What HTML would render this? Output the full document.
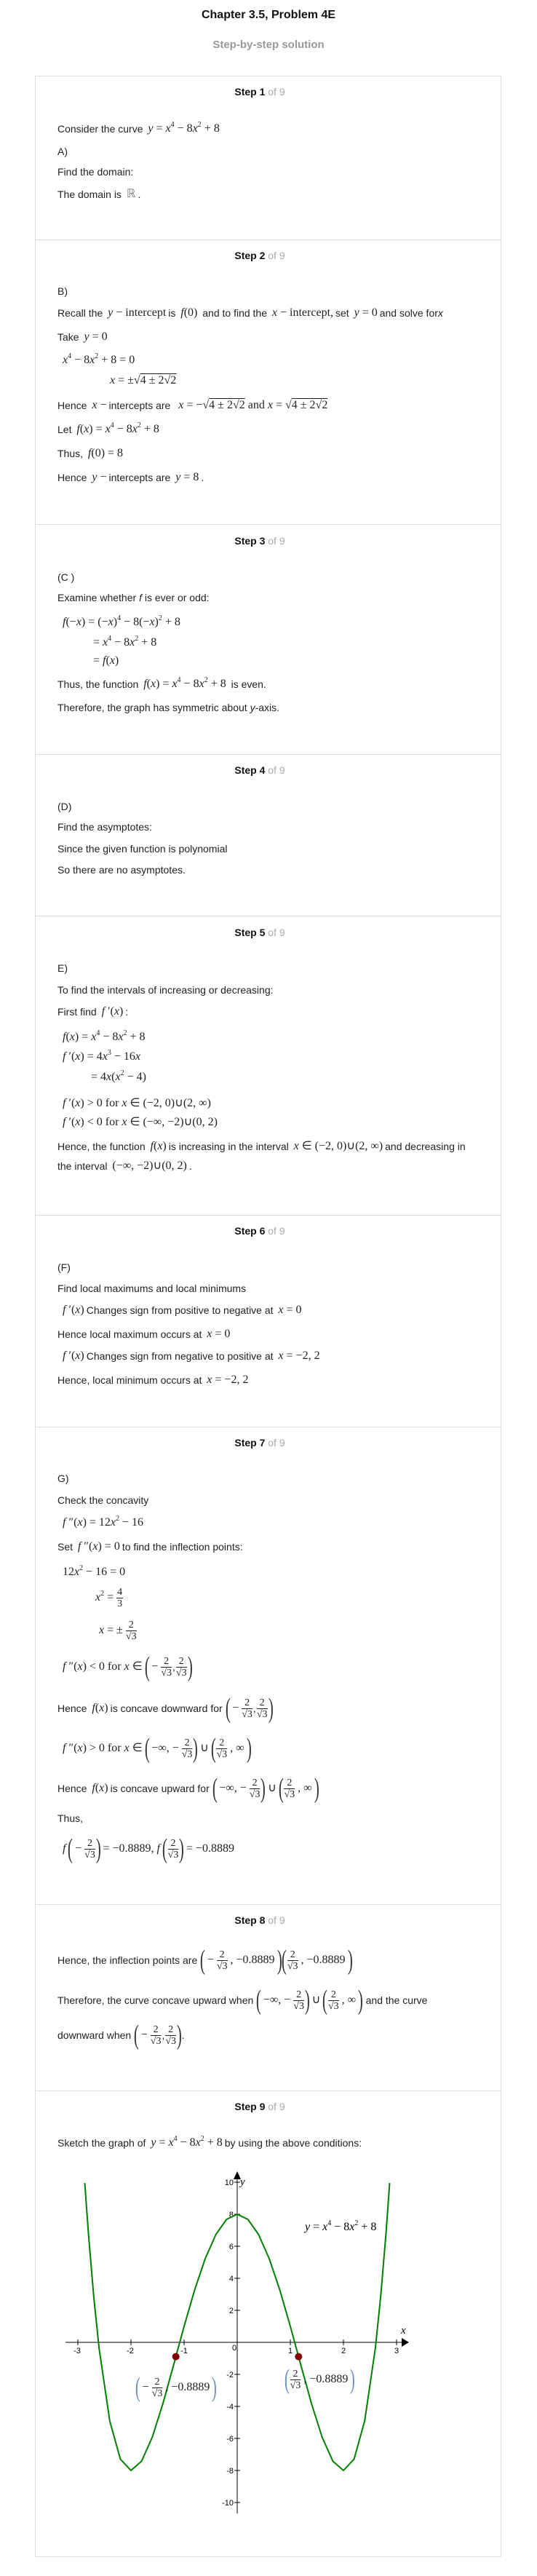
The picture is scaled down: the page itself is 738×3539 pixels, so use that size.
<!DOCTYPE html>
<html><head><meta charset="utf-8"><style>
*{margin:0;padding:0;box-sizing:border-box}
body{width:738px;height:3539px;background:#fff;position:relative;font-family:"Liberation Sans",Arial,sans-serif;color:#222;overflow:hidden}
.a{position:absolute;white-space:nowrap}
.title{left:0;width:738px;text-align:center;font-weight:bold;font-size:16px;top:12px;color:#111}
.sub{left:0;width:738px;text-align:center;font-weight:bold;font-size:15px;top:53px;color:#999}
.box{position:absolute;left:48px;top:104px;width:641px;height:3409px;border:1px solid #ddd}
.hr{position:absolute;left:48px;width:641px;height:1px;background:#ddd}
.h{left:0;width:714px;text-align:center;font-size:14px;font-weight:bold;line-height:20px;color:#111}
.h span{font-weight:normal;color:#aaa}
.L{position:absolute;left:79px;font-size:14px;line-height:20px;white-space:nowrap;display:flex;align-items:center;height:20px}
.F{height:44px}
.m{font-family:"Liberation Serif",serif;font-size:16px;margin:0 3px}
.m i{font-style:italic}
sup{font-size:10px;vertical-align:7px;line-height:0}
.fr{display:inline-flex;flex-direction:column;text-align:center;font-family:"Liberation Serif",serif;font-size:14px;line-height:15px;vertical-align:middle;margin:0 1px}
.fr>span:first-child{border-bottom:1px solid #222;padding:0 1px}
.ov{text-decoration:overline}
.bp{font-family:"Liberation Serif",serif;font-size:38px;line-height:38px;display:inline-block;transform:scaleX(.55);font-weight:100;color:#333;margin:0 -3px}
</style></head><body>
<div class="a title">Chapter 3.5, Problem 4E</div>
<div class="a sub">Step-by-step solution</div>
<div class="box"></div>
<div class="hr" style="top:329px"></div><div class="hr" style="top:720px"></div><div class="hr" style="top:1036px"></div><div class="hr" style="top:1258px"></div><div class="hr" style="top:1669px"></div><div class="hr" style="top:1960px"></div><div class="hr" style="top:2616px"></div><div class="hr" style="top:2872px"></div>

<div class="a h" style="top:116px">Step 1 <span>of 9</span></div>
<div class="a h" style="top:341px">Step 2 <span>of 9</span></div>
<div class="a h" style="top:733px">Step 3 <span>of 9</span></div>
<div class="a h" style="top:1048px">Step 4 <span>of 9</span></div>
<div class="a h" style="top:1271px">Step 5 <span>of 9</span></div>
<div class="a h" style="top:1681px">Step 6 <span>of 9</span></div>
<div class="a h" style="top:1972px">Step 7 <span>of 9</span></div>
<div class="a h" style="top:2628px">Step 8 <span>of 9</span></div>
<div class="a h" style="top:2884px">Step 9 <span>of 9</span></div>

<!-- step1 -->
<div class="L" style="top:167px">Consider the curve&nbsp;<span class="m"><i>y</i> = <i>x</i><sup>4</sup> − 8<i>x</i><sup>2</sup> + 8</span></div>
<div class="L" style="top:198px">A)</div>
<div class="L" style="top:226px">Find the domain:</div>
<div class="L" style="top:257px">The domain is&nbsp;<span class="m" style="color:#777">ℝ</span>.</div>

<!-- step2 -->
<div class="L" style="top:390px">B)</div>
<div class="L" style="top:420px">Recall the&nbsp;<span class="m"><i>y</i> − intercept</span>is&nbsp;<span class="m"><i>f</i>(0)</span>&nbsp;and to find the&nbsp;<span class="m"><i>x</i> − intercept,</span>set&nbsp;<span class="m"><i>y</i> = 0</span>and solve for <i>x</i></div>
<div class="L" style="top:453px">Take&nbsp;<span class="m"><i>y</i> = 0</span></div>
<div class="L" style="top:485px;left:83px"><span class="m"><i>x</i><sup>4</sup> − 8<i>x</i><sup>2</sup> + 8 = 0</span></div>
<div class="L" style="top:513px;left:148px"><span class="m"><i>x</i> = ±√<span class="ov">4 ± 2√<span class="ov">2</span></span></span></div>
<div class="L" style="top:547px">Hence&nbsp;<span class="m"><i>x</i> −</span>intercepts are&nbsp;<span class="m">&nbsp;<i>x</i> = −√<span class="ov">4 ± 2√<span class="ov">2</span></span> and <i>x</i> = √<span class="ov">4 ± 2√<span class="ov">2</span></span></span></div>
<div class="L" style="top:580px">Let&nbsp;<span class="m"><i>f</i>(<i>x</i>) = <i>x</i><sup>4</sup> − 8<i>x</i><sup>2</sup> + 8</span></div>
<div class="L" style="top:613px">Thus,&nbsp;<span class="m"><i>f</i>(0) = 8</span></div>
<div class="L" style="top:646px">Hence&nbsp;<span class="m"><i>y</i> −</span>intercepts are&nbsp;<span class="m"><i>y</i> = 8</span>.</div>

<!-- step3 -->
<div class="L" style="top:783px">(C )</div>
<div class="L" style="top:811px">Examine whether&nbsp;<i>f</i>&nbsp;is ever or odd:</div>
<div class="L" style="top:845px;left:83px"><span class="m"><i>f</i>(−<i>x</i>) = (−<i>x</i>)<sup>4</sup> − 8(−<i>x</i>)<sup>2</sup> + 8</span></div>
<div class="L" style="top:873px;left:125px"><span class="m">= <i>x</i><sup>4</sup> − 8<i>x</i><sup>2</sup> + 8</span></div>
<div class="L" style="top:898px;left:125px"><span class="m">= <i>f</i>(<i>x</i>)</span></div>
<div class="L" style="top:930px">Thus, the function&nbsp;<span class="m"><i>f</i>(<i>x</i>) = <i>x</i><sup>4</sup> − 8<i>x</i><sup>2</sup> + 8</span>&nbsp;is even.</div>
<div class="L" style="top:962px">Therefore, the graph has symmetric about&nbsp;<i>y</i>-axis.</div>

<!-- step4 -->
<div class="L" style="top:1098px">(D)</div>
<div class="L" style="top:1126px">Find the asymptotes:</div>
<div class="L" style="top:1156px">Since the given function is polynomial</div>
<div class="L" style="top:1185px">So there are no asymptotes.</div>

<!-- step5 -->
<div class="L" style="top:1320px">E)</div>
<div class="L" style="top:1350px">To find the intervals of increasing or decreasing:</div>
<div class="L" style="top:1380px">First find&nbsp;<span class="m"><i>f</i> ′(<i>x</i>)</span>:</div>
<div class="L" style="top:1415px;left:83px"><span class="m"><i>f</i>(<i>x</i>) = <i>x</i><sup>4</sup> − 8<i>x</i><sup>2</sup> + 8</span></div>
<div class="L" style="top:1442px;left:83px"><span class="m"><i>f</i> ′(<i>x</i>) = 4<i>x</i><sup>3</sup> − 16<i>x</i></span></div>
<div class="L" style="top:1470px;left:122px"><span class="m">= 4<i>x</i>(<i>x</i><sup>2</sup> − 4)</span></div>
<div class="L" style="top:1506px;left:83px"><span class="m"><i>f</i> ′(<i>x</i>) &gt; 0 for <i>x</i> ∈ (−2, 0)∪(2, ∞)</span></div>
<div class="L" style="top:1532px;left:83px"><span class="m"><i>f</i> ′(<i>x</i>) &lt; 0 for <i>x</i> ∈ (−∞, −2)∪(0, 2)</span></div>
<div class="L" style="top:1565px">Hence, the function&nbsp;<span class="m"><i>f</i>(<i>x</i>)</span>is increasing in the interval&nbsp;<span class="m"><i>x</i> ∈ (−2, 0)∪(2, ∞)</span>and decreasing in</div>
<div class="L" style="top:1592px">the interval&nbsp;<span class="m">(−∞, −2)∪(0, 2)</span>.</div>

<!-- step6 -->
<div class="L" style="top:1731px">(F)</div>
<div class="L" style="top:1760px">Find local maximums and local minimums</div>
<div class="L" style="top:1790px;left:83px"><span class="m"><i>f</i> ′(<i>x</i>)</span>Changes sign from positive to negative at&nbsp;<span class="m"><i>x</i> = 0</span></div>
<div class="L" style="top:1823px">Hence local maximum occurs at&nbsp;<span class="m"><i>x</i> = 0</span></div>
<div class="L" style="top:1853px;left:83px"><span class="m"><i>f</i> ′(<i>x</i>)</span>Changes sign from negative to positive at&nbsp;<span class="m"><i>x</i> = −2, 2</span></div>
<div class="L" style="top:1886px">Hence, local minimum occurs at&nbsp;<span class="m"><i>x</i> = −2, 2</span></div>

<!-- step7 -->
<div class="L" style="top:2021px">G)</div>
<div class="L" style="top:2051px">Check the concavity</div>
<div class="L" style="top:2082px;left:83px"><span class="m"><i>f</i> ″(<i>x</i>) = 12<i>x</i><sup>2</sup> − 16</span></div>
<div class="L" style="top:2115px">Set&nbsp;<span class="m"><i>f</i> ″(<i>x</i>) = 0</span>to find the inflection points:</div>
<div class="L" style="top:2150px;left:83px"><span class="m">12<i>x</i><sup>2</sup> − 16 = 0</span></div>
<div class="L F" style="top:2173px;left:128px"><span class="m"><i>x</i><sup>2</sup> =</span><span class="fr"><span style="border:0;border-bottom:1px solid #222">4</span><span>3</span></span></div>
<div class="L F" style="top:2218px;left:133px"><span class="m"><i>x</i> = ±</span><span class="fr"><span>2</span><span>√<span class="ov">3</span></span></span></div>
<div class="L F" style="top:2268px;left:83px"><span class="m"><i>f</i> ″(<i>x</i>) &lt; 0 for <i>x</i> ∈</span><span class="bp">(</span><span class="m">−</span><span class="fr"><span>2</span><span>√<span class="ov">3</span></span></span>,<span class="fr"><span>2</span><span>√<span class="ov">3</span></span></span><span class="bp">)</span></div>
<div class="L F" style="top:2325px">Hence&nbsp;<span class="m"><i>f</i>(<i>x</i>)</span>is concave downward for&nbsp;<span class="bp">(</span><span class="m">−</span><span class="fr"><span>2</span><span>√<span class="ov">3</span></span></span>,<span class="fr"><span>2</span><span>√<span class="ov">3</span></span></span><span class="bp">)</span></div>
<div class="L F" style="top:2380px;left:83px"><span class="m"><i>f</i> ″(<i>x</i>) &gt; 0 for <i>x</i> ∈</span><span class="bp">(</span><span class="m">−∞, −</span><span class="fr"><span>2</span><span>√<span class="ov">3</span></span></span><span class="bp">)</span><span class="m">∪</span><span class="bp">(</span><span class="fr"><span>2</span><span>√<span class="ov">3</span></span></span><span class="m">, ∞</span><span class="bp">)</span></div>
<div class="L F" style="top:2435px">Hence&nbsp;<span class="m"><i>f</i>(<i>x</i>)</span>is concave upward for&nbsp;<span class="bp">(</span><span class="m">−∞, −</span><span class="fr"><span>2</span><span>√<span class="ov">3</span></span></span><span class="bp">)</span><span class="m">∪</span><span class="bp">(</span><span class="fr"><span>2</span><span>√<span class="ov">3</span></span></span><span class="m">, ∞</span><span class="bp">)</span></div>
<div class="L" style="top:2488px">Thus,</div>
<div class="L F" style="top:2518px;left:83px"><span class="m"><i>f</i></span><span class="bp">(</span><span class="m">−</span><span class="fr"><span>2</span><span>√<span class="ov">3</span></span></span><span class="bp">)</span><span class="m">= −0.8889, <i>f</i></span><span class="bp">(</span><span class="fr"><span>2</span><span>√<span class="ov">3</span></span></span><span class="bp">)</span><span class="m">= −0.8889</span></div>

<!-- step8 -->
<div class="L F" style="top:2671px">Hence, the inflection points are&nbsp;<span class="bp">(</span><span class="m">−</span><span class="fr"><span>2</span><span>√<span class="ov">3</span></span></span><span class="m">, −0.8889</span><span class="bp">)</span><span class="bp">(</span><span class="fr"><span>2</span><span>√<span class="ov">3</span></span></span><span class="m">, −0.8889</span><span class="bp">)</span></div>
<div class="L F" style="top:2726px">Therefore, the curve concave upward when&nbsp;<span class="bp">(</span><span class="m">−∞, −</span><span class="fr"><span>2</span><span>√<span class="ov">3</span></span></span><span class="bp">)</span><span class="m">∪</span><span class="bp">(</span><span class="fr"><span>2</span><span>√<span class="ov">3</span></span></span><span class="m">, ∞</span><span class="bp">)</span>&nbsp;and the curve</div>
<div class="L F" style="top:2774px">downward when&nbsp;<span class="bp">(</span><span class="m">−</span><span class="fr"><span>2</span><span>√<span class="ov">3</span></span></span>,<span class="fr"><span>2</span><span>√<span class="ov">3</span></span></span><span class="bp">)</span>.</div>

<!-- step9 -->
<div class="L" style="top:2934px">Sketch the graph of&nbsp;<span class="m"><i>y</i> = <i>x</i><sup>4</sup> − 8<i>x</i><sup>2</sup> + 8</span>by using the above conditions:</div>

<svg class="a" style="left:0;top:2960px" width="738" height="510" viewBox="0 0 738 510" font-family="Liberation Sans, sans-serif" font-size="11">
<line x1="90" y1="258" x2="552" y2="258" stroke="#000" stroke-width="1"/>
<polygon points="552,252 562,258 552,264" fill="#000"/>
<line x1="326" y1="30" x2="326" y2="493" stroke="#000" stroke-width="1"/>
<polygon points="321,34 326,23 331,34" fill="#000"/>
<g stroke="#000">
<line x1="322" y1="38" x2="330" y2="38"/><line x1="322" y1="82" x2="330" y2="82"/><line x1="322" y1="126" x2="330" y2="126"/><line x1="322" y1="170" x2="330" y2="170"/><line x1="322" y1="214" x2="330" y2="214"/><line x1="322" y1="302" x2="330" y2="302"/><line x1="322" y1="346" x2="330" y2="346"/><line x1="322" y1="390" x2="330" y2="390"/><line x1="322" y1="434" x2="330" y2="434"/><line x1="322" y1="478" x2="330" y2="478"/>
<line x1="107" y1="254" x2="107" y2="262"/><line x1="180" y1="254" x2="180" y2="262"/><line x1="253" y1="254" x2="253" y2="262"/><line x1="399" y1="254" x2="399" y2="262"/><line x1="472" y1="254" x2="472" y2="262"/><line x1="545" y1="254" x2="545" y2="262"/>
</g>
<g text-anchor="end" fill="#000">
<text x="321" y="42">10</text><text x="321" y="86">8</text><text x="321" y="130">6</text><text x="321" y="174">4</text><text x="321" y="218">2</text><text x="321" y="306">-2</text><text x="321" y="350">-4</text><text x="321" y="394">-6</text><text x="321" y="438">-8</text><text x="321" y="482">-10</text>
</g>
<g text-anchor="middle" fill="#000">
<text x="106" y="273">-3</text><text x="179" y="273">-2</text><text x="253" y="273">-1</text><text x="322" y="269">0</text><text x="399" y="273">1</text><text x="472" y="273">2</text><text x="545" y="273">3</text>
</g>
<text x="330" y="42" font-family="Liberation Serif, serif" font-style="italic" font-size="15">y</text>
<text x="551" y="246" font-family="Liberation Serif, serif" font-style="italic" font-size="15">x</text>
<text x="419" y="104" font-family="Liberation Serif, serif" font-size="16"><tspan font-style="italic">y</tspan> = <tspan font-style="italic">x</tspan><tspan font-size="10" dy="-7">4</tspan><tspan dy="7"> − 8</tspan><tspan font-style="italic">x</tspan><tspan font-size="10" dy="-7">2</tspan><tspan dy="7"> + 8</tspan></text>
<polyline fill="none" stroke="#008000" stroke-width="2" stroke-linejoin="round" points="116.5,39.1 121.6,109.5 128.9,196 136.2,266.4 150.8,365.8 165.4,418.4 180,434 194.6,421.2 209.2,388.5 223.8,342.5 238.4,289.8 253,236 267.6,185.6 282.2,142.5 296.8,109.6 311.4,89 326,82 340.6,89 355.2,109.6 369.8,142.5 384.4,185.6 399,236 413.6,289.8 428.2,342.5 442.8,388.5 457.4,421.2 472,434 486.6,418.4 501.2,365.8 515.8,266.4 523.1,196 530.4,109.5 535.5,39.1"/>
<circle cx="241.7" cy="277.6" r="5" fill="#800000"/>
<circle cx="410.3" cy="277.6" r="5" fill="#800000"/>
</svg>
<div class="L F" style="top:3258px;left:186px"><span class="bp" style="color:#6a8fc0">(</span><span class="m">−</span><span class="fr"><span>2</span><span>√<span class="ov">3</span></span></span><span class="m">, −0.8889</span><span class="bp" style="color:#6a8fc0">)</span></div>
<div class="L F" style="top:3247px;left:391px"><span class="bp" style="color:#6a8fc0">(</span><span class="fr"><span>2</span><span>√<span class="ov">3</span></span></span><span class="m">, −0.8889</span><span class="bp" style="color:#6a8fc0">)</span></div>
</body></html>
